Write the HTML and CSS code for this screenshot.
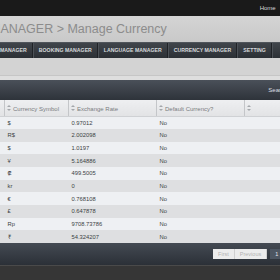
FILE: index.html
```html
<!DOCTYPE html>
<html>
<head>
    <meta charset="UTF-8">
    <title>Manage Currency</title>
    <link rel="stylesheet" href="styles.css">
</head>
<body>
<div class="page">
    <div class="topbar">
        <a class="top-link">Home</a>
        <a class="top-link">Logout</a>
    </div>
    <div class="titlebar">
        <h1>MANAGER &gt; Manage Currency</h1>
    </div>
    <ul class="nav">
        <li>Manager</li>
        <li>Booking Manager</li>
        <li>Language Manager</li>
        <li>Currency Manager</li>
        <li>Setting</li>
    </ul>
    <div class="crumbs"></div>
    <div class="gap"></div>

    <div class="grid">
        <div class="toolbar">
            <label>Search:</label>
            <span class="search-box"></span>
        </div>
        <table>
            <colgroup>
                <col class="c0"><col class="c1"><col class="c2"><col class="c3"><col class="c4">
            </colgroup>
            <thead>
                <tr>
                    <th><span class="sort"></span></th>
                    <th><span class="sort"></span>Currency Symbol</th>
                    <th><span class="sort"></span>Exchange Rate</th>
                    <th><span class="sort"></span>Default Currency?</th>
                    <th><span class="sort"></span></th>
                </tr>
            </thead>
            <tbody id="rows"></tbody>
        </table>
        <div class="pager">
            <span class="btn off">First</span>
            <span class="btn off">Previous</span>
            <span class="btn current">1</span>
            <span class="btn off">Next</span>
            <span class="btn off">Last</span>
        </div>
    </div>
    <div class="footer"></div>
</div>

<script>
    const currencies = [
        ['$', '0.97012'],
        ['R$', '2.002098'],
        ['$', '1.0197'],
        ['¥', '5.164886'],
        ['₡', '499.5005'],
        ['kr', '0'],
        ['€', '0.768108'],
        ['£', '0.647878'],
        ['Rp', '9708.73786'],
        ['₹', '54.324207']
    ];

    // 排序图标
    const sortIcon = '<svg width="4" height="6" viewBox="0 0 4 6"><path d="M2 0L4 2H0z M2 6L0 4H4z" fill="#a4a7ab"/></svg>';
    document.querySelectorAll('.sort').forEach(s => s.innerHTML = sortIcon);

    document.getElementById('rows').innerHTML = currencies.map(c => `
        <tr>
            <td></td>
            <td>${c[0]}</td>
            <td>${c[1]}</td>
            <td>No</td>
            <td></td>
        </tr>`).join('');
</script>
</body>
</html>
```

FILE: styles.css
```css
body {
    margin: 0;
    width: 280px;
    height: 280px;
    overflow: hidden;
    background: #dcdcdc;
    font-family: "Liberation Sans", Arial, sans-serif;
}
.page {
    width: 350px;
    margin-left: -20px;
}
.topbar {
    height: 16px;
    background: #1a1a1a;
    display: flex;
    justify-content: flex-end;
    align-items: center;
    gap: 8px;
    padding-right: 28px;
}
.top-link {
    color: #d8d8d8;
    font-size: 6px;
}
.titlebar {
    height: 26px;
    background: linear-gradient(#d4d4d4, #c9c9c9);
    display: flex;
    align-items: center;
}
h1 {
    margin: 0 0 0 10px;
    font-size: 12.5px;
    font-weight: normal;
    color: #8c8c8c;
}
.nav {
    list-style: none;
    margin: 0;
    padding: 0;
    height: 16px;
    display: flex;
    background: linear-gradient(#40454b, #2c3035);
    border-top: 1px solid #50555b;
    box-sizing: border-box;
}
.nav li {
    font-size: 5.2px;
    font-weight: bold;
    text-transform: uppercase;
    color: #d6d9dc;
    line-height: 15px;
    padding: 0 5px 0 6px;
    border-right: 1px solid #1f2226;
    box-shadow: 1px 0 0 #4c5157;
    white-space: nowrap;
}
.nav li:first-child {
    margin-left: 14px;
}
.crumbs {
    height: 17px;
    background: #d3d3d3;
    border-bottom: 1px solid #c6c6c6;
}
.gap {
    height: 4px;
    background: #dedede;
}
.toolbar {
    height: 20px;
    background: linear-gradient(#4a5059, #2e333a);
    display: flex;
    justify-content: flex-end;
    align-items: center;
    padding-right: 4px;
}
.toolbar label {
    font-size: 6px;
    color: #dcdfe2;
    margin-right: 3px;
}
.search-box {
    width: 34px;
    height: 9px;
    background: #f4f4f4;
    border-radius: 2px;
}
table {
    width: 100%;
    border-collapse: collapse;
    table-layout: fixed;
}
.c0 { width: 24px; }
.c1 { width: 64px; }
.c2 { width: 88px; }
.c3 { width: 88px; }
th {
    height: 16.5px;
    padding: 0 2.5px;
    background: linear-gradient(#eeeff1, #e2e3e5);
    border-right: 1px solid #c4c6c9;
    border-bottom: 1px solid #cfd1d4;
    font-size: 6px;
    font-weight: normal;
    color: #7a7d81;
    text-align: left;
    white-space: nowrap;
    box-sizing: border-box;
}
.sort {
    display: inline-block;
    margin-right: 2px;
    vertical-align: -0.5px;
}
.sort svg {
    display: block;
}
td {
    height: 12.65px;
    padding: 0 0 0 3.5px;
    font-size: 5.8px;
    color: #3c3f43;
    box-sizing: border-box;
}
tbody tr:nth-child(odd) {
    background: #eef0f3;
}
tbody tr:nth-child(even) {
    background: #dedfe1;
}
.pager {
    height: 22px;
    background: linear-gradient(#444a53, #2b3037);
    display: flex;
    justify-content: flex-end;
    align-items: center;
    padding-right: 0;
}
.btn {
    font-size: 5.5px;
    height: 10px;
    line-height: 10px;
    padding: 0 5px;
    background: #ececec;
    color: #b3b3b3;
    border-right: 1px solid #d0d0d0;
}
.btn.current {
    background: #4d5662;
    color: #e6e8ea;
    margin: 0 3px;
    border: none;
}
.footer {
    height: 15px;
    background: #363636;
    border-top: 1px solid #4a4a4a;
}
```
